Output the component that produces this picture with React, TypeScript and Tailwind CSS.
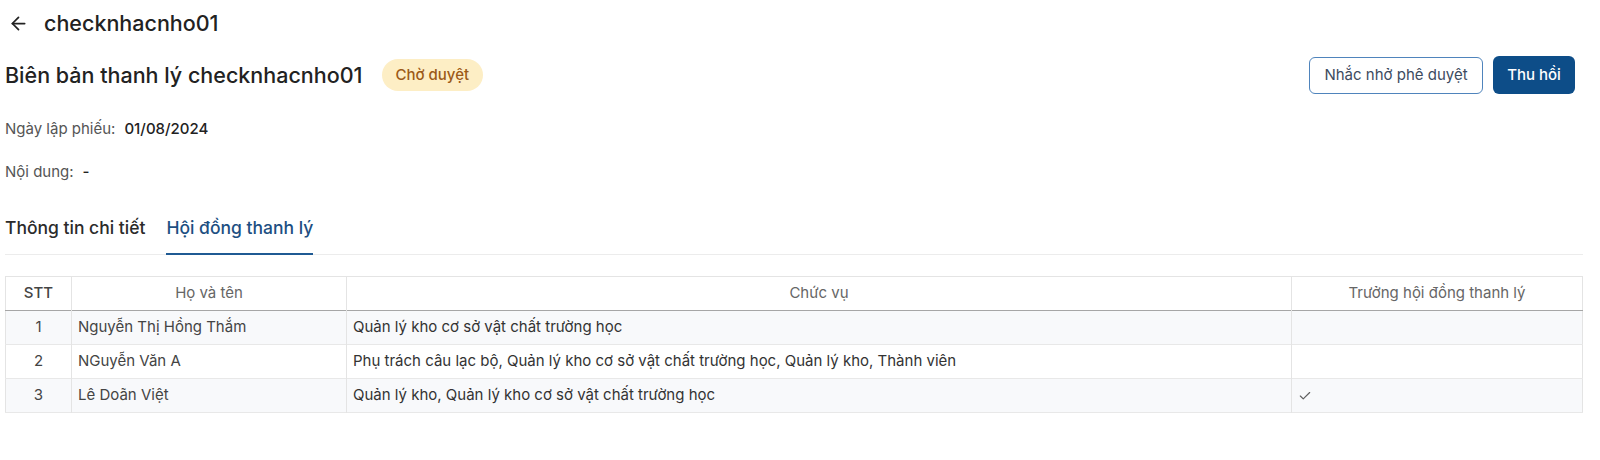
import { ArrowLeft, Check } from "lucide-react";

const members = [
  { stt: 1, name: "Nguyễn Thị Hồng Thắm", role: "Quản lý kho cơ sở vật chất trường học", head: false },
  {
    stt: 2,
    name: "NGuyễn Văn A",
    role: "Phụ trách câu lạc bộ, Quản lý kho cơ sở vật chất trường học, Quản lý kho, Thành viên",
    head: false,
  },
  { stt: 3, name: "Lê Doãn Việt", role: "Quản lý kho, Quản lý kho cơ sở vật chất trường học", head: true },
];

export default function App() {
  return (
    <main className="min-h-[460px] bg-white pl-[5px] pr-[17px] text-[#333] font-['Inter','Noto_Sans',sans-serif]">
      {/* Header */}
      <div className="flex h-[46px] items-center">
        <button className="ml-[3px] mr-[15px] text-[#222]">
          <ArrowLeft size={21} strokeWidth={2} />
        </button>
        <h1 className="text-[21.5px] font-medium text-[#222]">checknhacnho01</h1>
      </div>

      {/* Title row */}
      <div className="mt-[9px] flex h-[40px] items-center justify-between">
        <div className="flex items-center gap-[19px]">
          <h2 className="text-[21.5px] font-medium text-[#222]">Biên bản thanh lý checknhacnho01</h2>
          <span className="flex h-[32px] items-center rounded-full bg-[#fdeec5] px-[14px] text-[15px] font-medium text-[#9c5a17]">
            Chờ duyệt
          </span>
        </div>
        <div className="mr-[8px] flex items-center gap-[10px]">
          <button className="h-[37px] w-[174px] rounded-[6px] border border-[#4f84bc] bg-white text-[15px] text-[#3d4b60]">
            Nhắc nhở phê duyệt
          </button>
          <button className="h-[38px] w-[82px] rounded-[6px] bg-[#0d4d88] text-[15px] font-medium text-white">
            Thu hồi
          </button>
        </div>
      </div>

      {/* Info */}
      <div className="mt-[24px] flex h-[20px] items-center gap-[9px] text-[15px]">
        <span className="text-[#555]">Ngày lập phiếu:</span>
        <span className="font-medium text-[#222]">01/08/2024</span>
      </div>
      <div className="mt-[23px] flex h-[20px] items-center gap-[9px] text-[15px]">
        <span className="text-[#555]">Nội dung:</span>
        <span className="font-medium text-[#222]">-</span>
      </div>

      {/* Tabs */}
      <div className="mt-[33px] flex gap-[21px] border-b border-[#ececec]">
        <button className="-mb-px border-b-2 border-transparent pb-[13px] text-[17.5px] font-medium leading-[25px] text-[#2b2b2b]">
          Thông tin chi tiết
        </button>
        <button className="-mb-px border-b-2 border-[#1f5a93] pb-[13px] text-[17.5px] font-medium leading-[25px] text-[#1d4f82]">
          Hội đồng thanh lý
        </button>
      </div>

      {/* Table */}
      <table className="mt-[21px] w-full border-collapse border border-[#e4e4e4] text-[15px]">
        <thead>
          <tr className="h-[34px] border-b border-[#a6a6a6]">
            <th className="w-[66px] border-r border-[#e4e4e4] font-medium text-[#444]">STT</th>
            <th className="w-[275px] border-r border-[#e4e4e4] font-normal text-[#666]">Họ và tên</th>
            <th className="w-[945px] border-r border-[#e4e4e4] font-normal text-[#666]">Chức vụ</th>
            <th className="font-normal text-[#666]">Trưởng hội đồng thanh lý</th>
          </tr>
        </thead>
        <tbody>
          {members.map((m, i) => (
            <tr
              key={m.stt}
              className={`h-[34px] border-b border-[#e8e8e8] ${i % 2 === 0 ? "bg-[#f8f9fb]" : "bg-white"}`}
            >
              <td className="border-r border-[#e4e4e4] text-center text-[#444]">{m.stt}</td>
              <td className="border-r border-[#e4e4e4] px-[6px] text-[#444]">{m.name}</td>
              <td className="border-r border-[#e4e4e4] px-[6px] text-[#333]">{m.role}</td>
              <td className="px-[6px] text-[#5f5f5f]">{m.head && <Check size={14} strokeWidth={2} />}</td>
            </tr>
          ))}
        </tbody>
      </table>
    </main>
  );
}
